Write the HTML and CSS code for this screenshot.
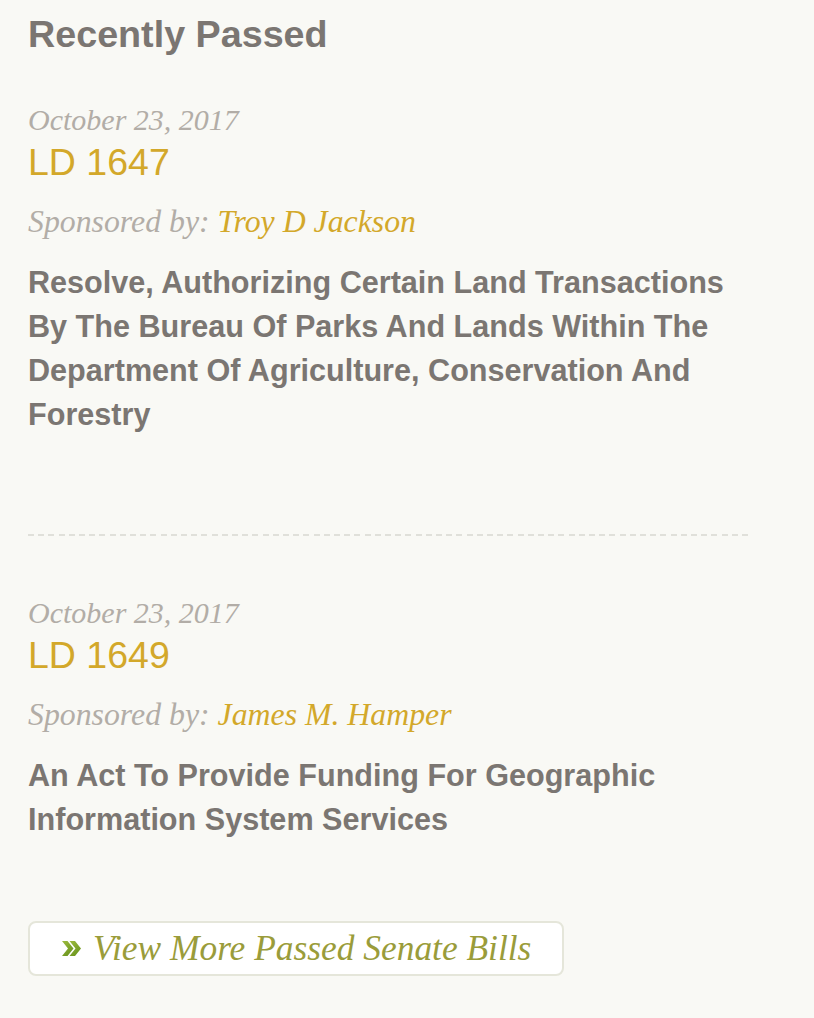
FILE: index.html
```html
<!DOCTYPE html>
<html>
<head>
<meta charset="utf-8">
<link rel="stylesheet" href="styles.css">
</head>
<body>
<section class="panel">
  <h2 class="title">Recently Passed</h2>
  <article class="bill">
    <div class="date">October 23, 2017</div>
    <a class="ld">LD 1647</a>
    <div class="sponsor">Sponsored by: <a class="name">Troy D Jackson</a></div>
    <p class="desc">Resolve, Authorizing Certain Land Transactions By The Bureau Of Parks And Lands Within The Department Of Agriculture, Conservation And Forestry</p>
  </article>
  <div class="sep"></div>
  <article class="bill">
    <div class="date">October 23, 2017</div>
    <a class="ld">LD 1649</a>
    <div class="sponsor">Sponsored by: <a class="name">James M. Hamper</a></div>
    <p class="desc">An Act To Provide Funding For Geographic Information System Services</p>
  </article>
  <a class="more"><svg class="chev" width="19" height="15" viewBox="0 0 19 15"><defs><linearGradient id="g" x1="0" x2="0.6" y1="0" y2="1"><stop offset="0" stop-color="#9dbb3e"/><stop offset="1" stop-color="#6c961f"/></linearGradient></defs><path d="M0 0h5.5l6 7.5-6 7.5H0l6-7.5z" fill="url(#g)"/><path d="M7.5 0H13l6 7.5-6 7.5H7.5l6-7.5z" fill="url(#g)"/></svg><span>View More Passed Senate Bills</span></a>
</section>
</body>
</html>
```
FILE: styles.css
```css
html, body { margin: 0; padding: 0; background: #f9f9f5; }
.panel { padding: 11px 0 0 28px; width: 720px; font-family: "Liberation Sans", Arial, sans-serif; }
.title { margin: 0; font-size: 37.7px; font-weight: bold; color: #7b7672; line-height: 46px; }
.bill { padding-top: 45px; }
.sep + .bill { padding-top: 59px; }
.date { font-family: "Liberation Serif", Georgia, serif; font-style: italic; font-size: 30px; color: #b2ada7; line-height: 36px; }
.ld { display: block; font-size: 37.5px; color: #d3a82a; line-height: 48px; }
.sponsor { font-family: "Liberation Serif", Georgia, serif; font-style: italic; font-size: 31.8px; color: #b2ada7; line-height: 36px; margin-top: 18px; }
.name { color: #d3a82a; }
.desc { margin: 20px 0 0; font-size: 30.6px; font-weight: bold; color: #7b7672; line-height: 44px; }
.sep { height: 2px; margin-top: 98px; background: repeating-linear-gradient(90deg, #e0e0da 0 6px, transparent 6px 10.2px); }
.more { display: inline-flex; align-items: center; gap: 12px; margin-top: 80px; padding: 7px 31px 7px 32px; background: #fff; border: 2px solid #e5e6da; border-radius: 8px; font-family: "Liberation Serif", Georgia, serif; font-style: italic; font-size: 35.4px; color: #9a9c3a; line-height: 37px; }
.chev { flex: none; }
```
